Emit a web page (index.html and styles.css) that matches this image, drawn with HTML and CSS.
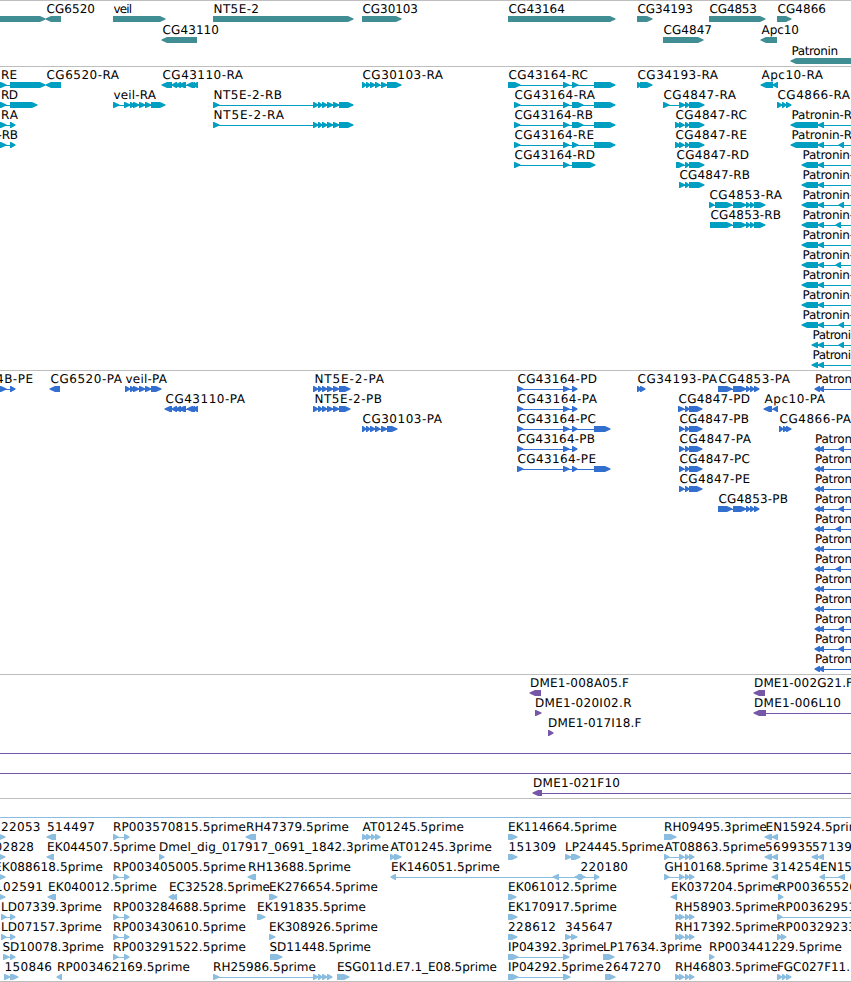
FILE: index.html
```html
<!DOCTYPE html>
<html lang="en">
<head>
<meta charset="utf-8">
<title>Genome browser</title>
<link rel="stylesheet" href="styles.css">
</head>
<body>
<main class="browser" id="browser"></main>
<script src="tracks.js"></script>
</body>
</html>
```
FILE: styles.css
```css
body {
  margin: 0;
  background: #fff;
}

.browser {
  display: flex;
  flex-direction: column;
  width: 851px;
  height: 982px;
  overflow: hidden;
}

.track {
  flex: none;
  box-sizing: border-box;
  border-top: 1px solid #bebebe;
  overflow: hidden;
}

.track svg {
  display: block;
  width: 851px;
  height: 100%;
}

.track text {
  font: 12px "DejaVu Sans", sans-serif;
  fill: #000;
  text-rendering: geometricPrecision;
}

.genes { height: 66px; color: #408e94; }
.transcripts { height: 304px; color: #009fc1; }
.proteins { height: 304px; color: #336fcf; }
.clones { height: 124px; color: #7657a7; }
.ests { height: 183px; color: #8abddf; }
.end { height: 1px; }

.track path,
.track rect {
  fill: currentColor;
}

.track rect {
  shape-rendering: crispEdges;
}
```
FILE: tracks.js
```js
// Feature: [row, strand, label, labelStart, labelEnd, exons, lineEnd]
// Exons are "start-end" pairs; "~" marks a negative coordinate.
const NT = '313-318 318-322 322-327 327-333 333-339 ';
const CG30 = '362-366 366-370 370-375 375-380 381-387 ';
const CG48 = '685-689 689-';
const CG53 = '733-746 746-750 750-754 754-';
const L43 = '172-177 176-181 179-186 187-193 191-195 193-198';
const VEIL = '130-134 133-139 139-145 145-151 151-';
const RP = '113-118 124-129';
const RH = '675-680 679-684 685-689 689-694';
const AT = '664-669 679-684 685-689 689-694';

const genes = [
  [0, 1, '', 0, 0, '~8-45'],
  [0, -1, 'CG6520', 46, 95, '46-61'],
  [0, 1, 'veil', 113, 132, '113-165'],
  [1, -1, 'CG43110', 162, 219, '162-197'],
  [0, 1, 'NT5E-2', 213, 259, '213-353'],
  [0, 1, 'CG30103', 362, 418, '362-401'],
  [0, 1, 'CG43164', 508, 565, '508-615'],
  [0, 1, 'CG34193', 637, 693, '637-652'],
  [1, 1, 'CG4847', 663, 712, '663-703'],
  [0, 1, 'CG4853', 709, 757, '709-765'],
  [1, -1, 'Apc10', 761, 799, '761-777'],
  [0, 1, 'CG4866', 777, 826, '777-791'],
  [2, -1, 'Patronin', 791, 838, '791-870']
];

const transcripts = [
  [0, 1, 'RE', 0.5, 17, '~4-6 10-45'],
  [1, 1, 'RD', 0.5, 18, '~4-6 10-37'],
  [2, 1, 'RA', 0.5, 18, '~4-6 10-15'],
  [3, 1, '-RB', -3, 18, '~4-6 10-15'],
  [0, -1, 'CG6520-RA', 46, 119, '46-61'],
  [0, -1, 'CG43110-RA', 162, 243, '162-172 ' + L43],
  [1, 1, 'veil-RA', 113, 156, '113-119 124-130 ' + VEIL + '165'],
  [1, 1, 'NT5E-2-RB', 213, 282, '213-219 ' + NT + '339-353'],
  [2, 1, 'NT5E-2-RA', 213, 284, '213-219 ' + NT + '339-353'],
  [0, 1, 'CG30103-RA', 362, 443, CG30 + '387-401'],
  [0, 1, 'CG43164-RC', 508, 588, '508-520 563-569 572-578 594-615'],
  [1, 1, 'CG43164-RA', 514, 595, '514-520 563-569 572-583 594-615'],
  [2, 1, 'CG43164-RB', 514, 593, '514-520 563-569 572-583 594-615'],
  [3, 1, 'CG43164-RE', 514, 594, '514-520 563-569 572-578 594-615'],
  [4, 1, 'CG43164-RD', 514, 595, '514-520 563-569 572-595'],
  [0, 1, 'CG34193-RA', 637, 718, '637-641 640-652'],
  [1, 1, 'CG4847-RA', 663, 736, '663-669 679-685 ' + CG48 + '704'],
  [2, 1, 'CG4847-RC', 675, 747, '675-680 679-684 ' + CG48 + '704'],
  [3, 1, 'CG4847-RE', 675, 747, '675-680 679-684 ' + CG48 + '704'],
  [4, 1, 'CG4847-RD', 676, 749, '676-684 ' + CG48 + '704'],
  [5, 1, 'CG4847-RB', 679, 750, '679-685 ' + CG48 + '704'],
  [6, 1, 'CG4853-RA', 709, 782, '709-714 715-732 ' + CG53 + '765'],
  [7, 1, 'CG4853-RB', 710, 781, '710-732 ' + CG53 + '765'],
  [0, -1, 'Apc10-RA', 761, 823, '761-773 773-778'],
  [1, 1, 'CG4866-RA', 777, 850, '777-782 782-786 786-791'],
  [2, -1, 'Patronin-R', 791, 852, '791-818 818-824', 860],
  [3, -1, 'Patronin-R', 791, 852, '791-818 818-824 839-844', 860]
];
['', '', 839, 836, '', 836, '', '', 839].forEach((x, i) =>
  transcripts.push([4 + i, -1, 'Patronin-', 802, 854,
    '802-818 818-824' + (x ? ` ${x}-${x + 5}` : ''), 860]));
transcripts.push([13, -1, 'Patroni', 812, 851, '812-818 818-824 839-844', 860]);
transcripts.push([14, -1, 'Patroni', 812, 851, '812-818 818-824', 860]);

const proteins = [
  [0, 1, '4B-PE', -4.5, 33, '~4-6 10-15'],
  [0, -1, 'CG6520-PA', 50, 122, '50-60'],
  [0, 1, 'veil-PA', 125, 167, '125-130 ' + VEIL + '161'],
  [1, -1, 'CG43110-PA', 165, 245, '165-172 ' + L43],
  [0, 1, 'NT5E-2-PA', 314, 384, NT + '339-350'],
  [1, 1, 'NT5E-2-PB', 314, 382, NT + '339-350'],
  [2, 1, 'CG30103-PA', 362, 442, CG30 + '387-397'],
  [0, 1, 'CG43164-PD', 517, 597, '517-523 563-569 572-577'],
  [1, 1, 'CG43164-PA', 517, 597, '517-523 563-569 572-577'],
  [2, 1, 'CG43164-PC', 517, 596, '517-523 563-569 572-577 594-610'],
  [3, 1, 'CG43164-PB', 517, 595, '517-523 563-569 572-577'],
  [4, 1, 'CG43164-PE', 517, 596, '517-523 563-569 572-577 594-610'],
  [0, 1, 'CG34193-PA', 637, 717, '637-641 640-645'],
  [0, 1, 'CG4853-PA', 718, 790, '718-732 ' + CG53 + '759'],
  [6, 1, 'CG4853-PB', 718, 788, '718-732 ' + CG53 + '759'],
  [1, 1, 'CG4847-PD', 678, 750, '678-684 ' + CG48 + '702'],
  [2, 1, 'CG4847-PB', 679, 749, '679-684 ' + CG48 + '702'],
  [3, 1, 'CG4847-PA', 679, 751, '679-684 ' + CG48 + '702'],
  [4, 1, 'CG4847-PC', 679, 750, '679-684 ' + CG48 + '702'],
  [5, 1, 'CG4847-PE', 679, 750, '679-684 ' + CG48 + '702'],
  [1, -1, 'Apc10-PA', 764, 825, '764-772 773-778'],
  [2, 1, 'CG4866-PA', 779, 851, '779-783 783-787 786-791']
];
[[0], [3, 839], [4], [5], [6, 839], [7, 836], [8], [9, 836], [10], [11], [12, 839], [13, 839], [14]]
  .forEach(([row, x]) => proteins.push([row, -1, 'Patron', 814.5, 852,
    '815-820 819-824' + (x ? ` ${x}-${x + 5}` : ''), 860]));

const clones = [
  [0, -1, 'DME1-008A05.F', 529.5, 629, '530-541'],
  [0, -1, 'DME1-002G21.F', 753.5, 853, '754-765'],
  [1, 1, 'DME1-020I02.R', 534.5, 631.5, '535-541'],
  [1, -1, 'DME1-006L10', 753.5, 841, '754-766', 860],
  [2, 1, 'DME1-017I18.F', 547.5, 641.5, '548-553'],
  [3, 1, '', 0, 0, '', 860],
  [4, 1, '', 0, 0, '', 860],
  [5, -1, 'DME1-021F10', 532.5, 620, '533-542', 860]
];

const ests = [
  [0, 1, '', 0, 0, '', 860],
  [1, 1, '22053', 0.5, 40.5, '~4-5'],
  [1, -1, '514497', 46.5, 95, '47-56'],
  [1, 1, 'RP003570815.5prime', 112.5, 246, RP],
  [1, -1, 'RH47379.5prime', 245.5, 349, '246-256'],
  [1, 1, 'AT01245.5prime', 362, 464, '362-367 366-371 371-375 375-380'],
  [1, 1, 'EK114664.5prime', 507.5, 617, '508-517'],
  [1, 1, 'RH09495.3prime', 663.5, 767, '664-676'],
  [1, -1, 'EN15924.5prime', 765, 868, '765-772 772-778'],
  [2, 1, '02828', -6, 34, '~4-5'],
  [2, -1, 'EK044507.5prime', 46.5, 156, '47-54'],
  [2, 1, 'Dmel_dig_017917_0691_1842.3prime', 158.5, 389, '159-164'],
  [2, 1, 'AT01245.3prime', 390, 492, '390-395 394-401'],
  [2, 1, '151309', 508, 556, '508-517'],
  [2, 1, 'LP24445.5prime', 564.5, 664, '565-571 571-580'],
  [2, 1, 'AT08863.5prime', 664, 766, AT],
  [2, -1, '569935', 764.5, 813, '765-772 772-778'],
  [2, -1, '57139', 811.5, 852, '812-818 818-824'],
  [3, 1, 'EK088618.5prime', -6.5, 103, '~4-5'],
  [3, 1, 'RP003405005.5prime', 112.5, 246, RP],
  [3, -1, 'RH13688.5prime', 247.5, 351, '248-256'],
  [3, -1, 'EK146051.5prime', 390.5, 500, '391-396 553-559 575-582'],
  [3, 1, '220180', 580, 628, '578-585 594-599'],
  [3, 1, 'GH10168.5prime', 664, 768, AT],
  [3, -1, '314254', 771.5, 820, '772-778'],
  [3, -1, 'EN15', 819.5, 852, '820-825 839-845'],
  [4, 1, '102591', -5.5, 43, '~4-5'],
  [4, -1, 'EK040012.5prime', 47.5, 157, '48-56'],
  [4, -1, 'EC32528.5prime', 168.5, 270, '169-174 172-177'],
  [4, 1, 'EK276654.5prime', 268.5, 378, '269-277'],
  [4, 1, 'EK061012.5prime', 507.5, 617, '508-516'],
  [4, -1, 'EK037204.5prime', 670.5, 780, '671-677'],
  [4, 1, 'RP00365526', 777.5, 857, '778-783'],
  [5, 1, 'LD07339.3prime', 0.5, 102, '1-6 10-15'],
  [5, 1, 'RP003284688.5prime', 112.5, 246, RP],
  [5, 1, 'EK191835.5prime', 256.5, 366, '257-265'],
  [5, 1, 'EK170917.5prime', 507.5, 617, '508-517'],
  [5, 1, 'RH58903.5prime', 674.5, 778, RH],
  [5, 1, 'RP00362951', 776.5, 856, '777-782', 860],
  [6, 1, 'LD07157.3prime', 0.5, 102, '1-6 10-15'],
  [6, 1, 'RP003430610.5prime', 112.5, 246, RP],
  [6, 1, 'EK308926.5prime', 268.5, 378, '269-275'],
  [6, 1, '228612', 507.5, 556, '508-517'],
  [6, 1, '345647', 564.5, 613, '565-571 571-577'],
  [6, 1, 'RH17392.5prime', 674.5, 778, RH],
  [6, 1, 'RP00329233', 776.5, 856, '777-782 781-786'],
  [7, 1, 'SD10078.3prime', 2, 104, '3-9 10-15'],
  [7, 1, 'RP003291522.5prime', 112.5, 246, RP],
  [7, 1, 'SD11448.5prime', 269, 371, '270-282'],
  [7, 1, 'IP04392.3prime', 507.5, 604, '508-518 563-569'],
  [7, 1, 'LP17634.3prime', 602.5, 702, '603-614'],
  [7, 1, 'RP003441229.5prime', 708.5, 842, '709-714'],
  [8, 1, '150846', 4, 52, '4-10 10-18'],
  [8, -1, 'RP003462169.5prime', 56.5, 190, '57-62'],
  [8, 1, 'RH25986.5prime', 212.5, 316, '213-219 313-318 318-322 322-327 327-332'],
  [8, 1, 'ESG011d.E7.1_E08.5prime', 336.5, 497, '337-349'],
  [8, 1, 'IP04292.5prime', 507.5, 604, '508-518 563-570'],
  [8, 1, '2647270', 604.5, 661, '605-615'],
  [8, 1, 'RH46803.5prime', 674.5, 778, RH],
  [8, 1, 'FGC027F11.', 776.5, 850, '777-782 782-786 786-791']
];

// Box with a pointed head; the shoulder stays at least one pixel wide.
function exon(a, b, strand, y) {
  const head = Math.min(5, b - a - 1);
  return strand > 0
    ? `M${a} ${y}H${b - head}L${b + 0.5} ${y + 2.5}V${y + 3.5}L${b - head} ${y + 6}H${a}Z`
    : `M${b} ${y}H${a + head}L${a - 0.5} ${y + 2.5}V${y + 3.5}L${a + head} ${y + 6}H${b}Z`;
}

function feature([row, strand, label, x, end, list, lineEnd], pitch) {
  const y = row * pitch;
  const exons = list ? list.split(' ').map(p => p.split('-').map(v => +v.replace('~', '-'))) : [];
  const from = exons.length ? exons[0][0] + 2 : 0;
  const to = lineEnd || exons[exons.length - 1][1] - 2;
  let out = '';
  if (exons.length !== 1 || lineEnd) {
    out += `<rect x="${from}" y="${y + 18}" width="${to - from}" height="1"/>`;
  }
  if (exons.length) out += `<path d="${exons.map(([a, b]) => exon(a, b, strand, y + 15)).join('')}"/>`;
  if (label) {
    const left = x + 0.5;
    out += `<text x="${left}" y="${y + 12}" textLength="${end - left}">${label}</text>`;
  }
  return out;
}

const tracks = [
  ['genes', genes, 21],
  ['transcripts', transcripts, 20],
  ['proteins', proteins, 20],
  ['clones', clones, 20],
  ['ests', ests, 20],
  ['end', [], 20]
];

document.getElementById('browser').innerHTML = tracks.map(([name, list, pitch]) =>
  `<section class="track ${name}"><svg>${list.map(f => feature(f, pitch)).join('')}</svg></section>`
).join('');
```
